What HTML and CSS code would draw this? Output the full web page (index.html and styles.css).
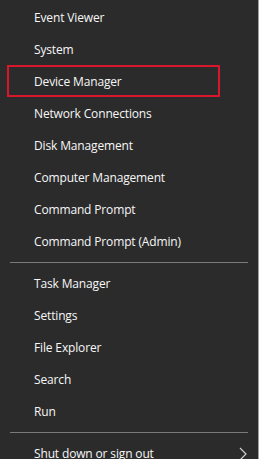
FILE: index.html
```html
<!DOCTYPE html>
<html>
<head>
<meta charset="utf-8">
<link rel="stylesheet" href="styles.css">
</head>
<body>
<div class="menu">
  <ul class="group">
    <li class="item">Event Viewer</li>
    <li class="item">System</li>
    <li class="item selected">Device Manager</li>
    <li class="item">Network Connections</li>
    <li class="item">Disk Management</li>
    <li class="item">Computer Management</li>
    <li class="item">Command Prompt</li>
    <li class="item">Command Prompt (Admin)</li>
  </ul>
  <div class="sep"></div>
  <ul class="group">
    <li class="item">Task Manager</li>
    <li class="item">Settings</li>
    <li class="item">File Explorer</li>
    <li class="item">Search</li>
    <li class="item">Run</li>
  </ul>
  <div class="sep"></div>
  <ul class="group">
    <li class="item submenu"><span>Shut down or sign out</span>
      <svg class="chev" width="8" height="14" viewBox="0 0 8 14"><path d="M1 1 L7 7 L1 13" fill="none" stroke="#cfcfcf" stroke-width="1.2"/></svg>
    </li>
  </ul>
</div>
</body>
</html>
```
FILE: styles.css
```css
html, body {
  margin: 0;
  padding: 0;
  background: #2b2b2b;
  height: 100%;
  overflow: hidden;
}
.menu {
  box-sizing: border-box;
  height: 459px;
  width: 259px;
  border-right: 1px solid #a0a0a0;
  padding-top: 1px;
  font-family: "Open Sans", "Noto Sans", sans-serif;
  font-size: 12px;
  letter-spacing: -0.15px;
  color: #f7f7f7;
}
.group {
  list-style: none;
  margin: 0;
  padding: 0;
}
.item {
  box-sizing: border-box;
  height: 32px;
  display: flex;
  align-items: center;
  margin: 0 7px;
  padding-left: 27px;
  width: 213px;
}
.selected {
  border: 2px solid #d8162c;
  padding-left: 25px;
}
.submenu {
  width: auto;
  justify-content: space-between;
  padding-right: 4px;
}
.chev {
  margin-top: 2px;
}
.sep {
  height: 1px;
  background: #7a7a7a;
  margin: 5px 10px 4px 10px;
}
```
